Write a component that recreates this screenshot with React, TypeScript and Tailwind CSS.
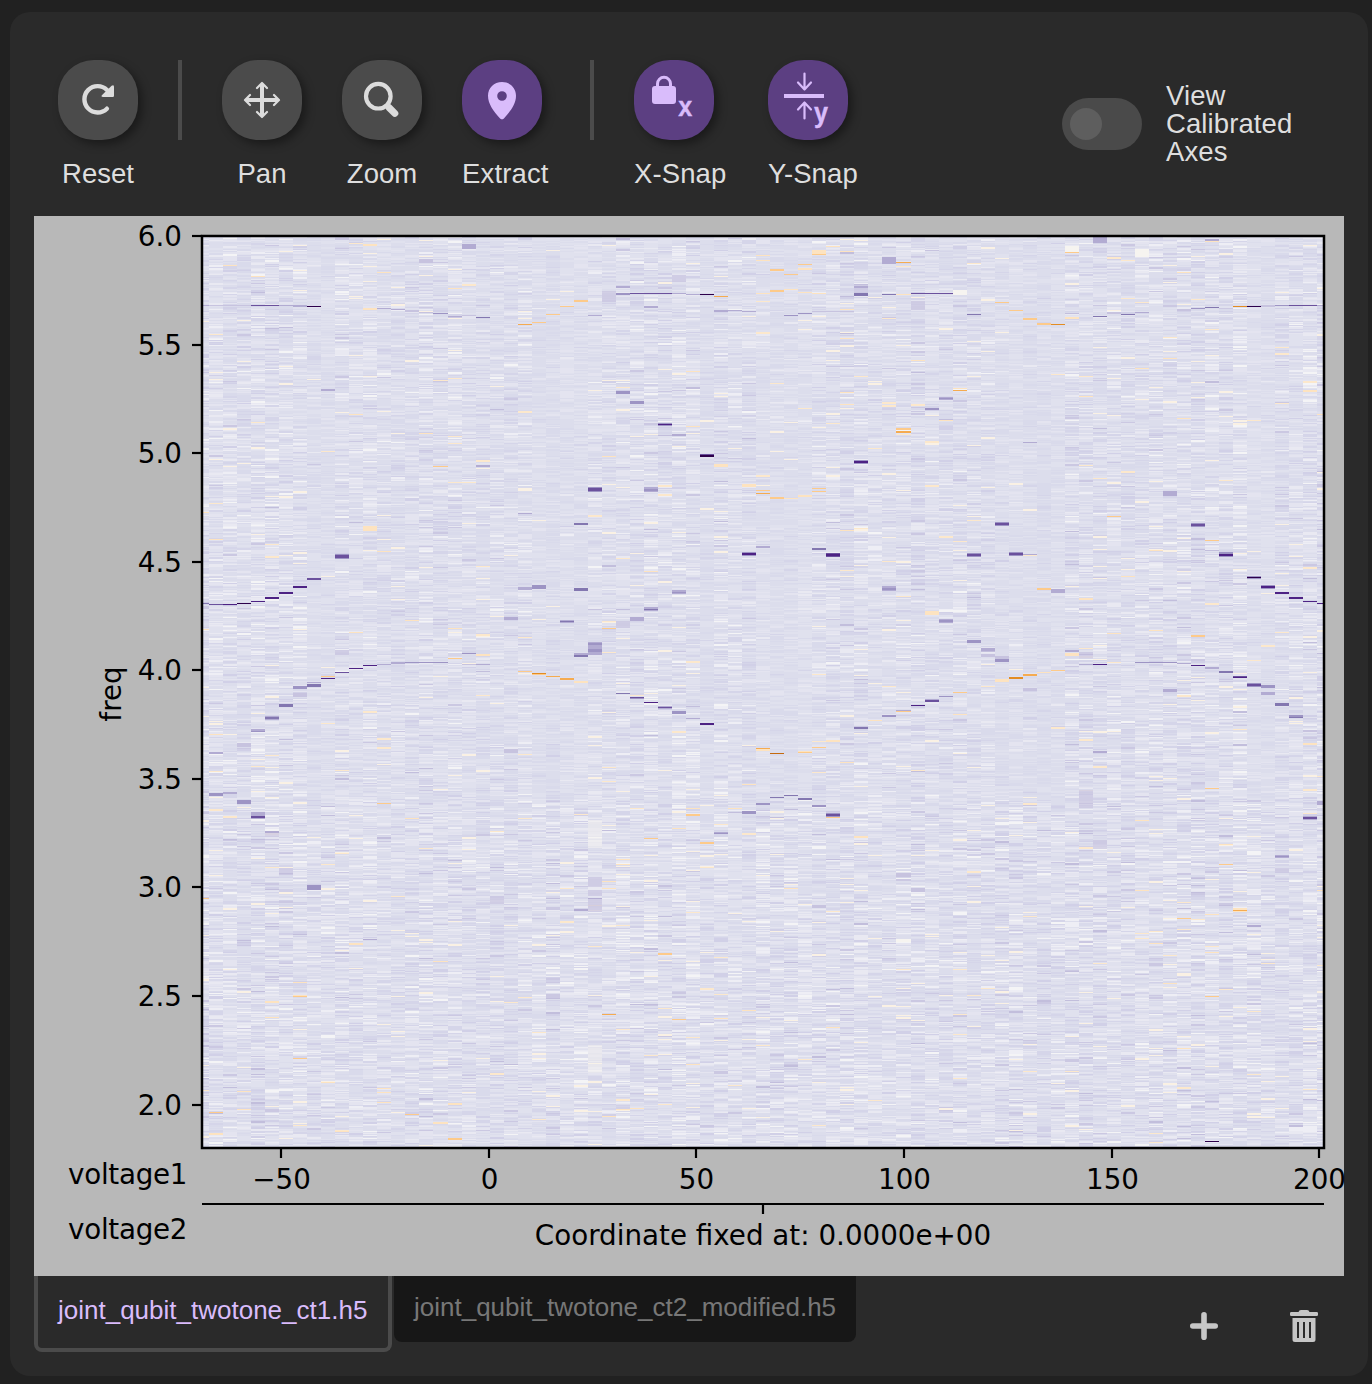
import React, { useMemo } from "react";

const SANS = "font-['Liberation_Sans',Arial,sans-serif]";

/* ---------- heat map ---------- */

const LEFT = 202;
const TOP = 236;
const RIGHT = 1324;
const BOTTOM = 1148;

const NOISE_COLORS = [
  "#fce8cc", "#faf1e4", "#f4f4f6", "#eeeef5", "#e9e9f2", "#e4e4f0", "#e0e1ee",
  "#dcddec", "#d9daeb", "#d5d5e9", "#d1d0e7", "#cbc8e2", "#c2bedc", "#b7b1d5",
];

const PEAK_COLORS: Record<string, string> = {
  A: "#2d004b", B: "#4d2284", b: "#6b519d", C: "#8377b0", c: "#9d94c4",
  D: "#b2abd2", E: "#c7c3df", o: "#fde3c0", p: "#fdca8a", q: "#f5ab50", r: "#e38c22", s: "#c4690e",
};

// column left edge, first row, rows, colour key
const PEAKS = `
203 305 1 D;209 305 1 E;223 305 1 E;237 305 1 E;251 305 1 b;265 305 1 b;279 305 1 D;293 305 2 D;307 306 1 A
363 308 2 o;363 244 2 o;377 308 1 D;391 309 1 D;405 310 2 E;419 312 1 E;433 313 1 c;447 316 1 D;461 315 1 E;475 317 1 C
518 324 1 q;532 322 1 p;546 314 1 p;560 306 1 p;574 300 2 p;461 244 5 D;419 259 4 E;321 389 2 D;363 526 5 o
335 554 5 c;335 555 3 b;307 578 2 b;293 586 2 B;279 592 2 B;265 597 2 B;251 601 1 B;237 603 1 A;223 604 1 B;209 604 1 b;203 603 1 C
475 465 2 D;433 466 1 p;518 587 3 D;532 585 4 c;574 523 2 C;574 588 3 C;419 433 1 o;447 288 1 o;518 513 1 D;377 272 1 o
377 551 1 o;349 414 1 o;251 276 1 o;223 265 1 o;203 512 1 o;209 539 1 o
616 286 2 D;602 291 11 E;616 293 2 c;630 293 1 b;644 293 1 b;658 293 1 b;672 293 1 D;686 294 1 D;700 294 1 A;714 296 1 q
756 293 1 o;770 290 2 p;784 289 1 o;798 292 1 o;812 293 1 o;910 293 1 b;924 293 1 b;938 293 1 b;882 294 1 C;896 294 1 o
854 285 8 E;854 286 2 D;854 293 3 C;672 275 7 E;714 310 2 D;728 310 1 D;742 311 1 D;784 315 1 c;798 313 1 c;812 311 1 E;826 311 1 E;840 311 1 E
588 315 1 D;770 269 2 p;784 274 1 p;798 264 1 p;798 268 2 o;812 250 5 o;812 254 1 p;756 255 1 o;756 260 1 o;826 246 1 o;840 251 1 o
882 257 7 D;896 262 1 q;910 301 9 E;644 306 2 D;616 391 3 c;630 401 3 c;658 423 3 c;658 424 1 B;672 434 2 D;686 426 1 o
700 454 3 b;700 455 2 A;714 464 3 o;742 484 3 o;756 490 1 p;756 493 1 q;770 497 2 p;784 498 1 o;798 495 2 o;812 488 1 p;812 491 1 p
588 487 5 c;588 488 3 b;644 487 5 D;644 489 2 c;742 552 4 c;742 553 2 B;756 546 2 D;812 548 2 C;826 553 4 b;826 554 2 B;840 530 1 o
854 460 4 c;854 461 2 B;896 428 2 p;896 431 2 q;910 360 1 o;924 408 2 c;938 397 3 D;938 398 1 c;938 420 1 o;882 586 5 D;882 588 2 c
672 590 4 D;672 592 1 c;840 392 1 o;840 404 1 o;602 456 1 o;644 571 1 o;588 609 1 E;924 250 1 E;686 371 1 o;840 309 1 o;840 338 1 o
966 314 1 C;994 302 1 p;1008 310 1 p;1022 318 2 p;1036 323 2 p;1051 324 1 r;1065 317 2 o;1093 316 1 C;1107 312 2 E;1121 314 1 C
1135 312 1 D;1177 309 2 E;1191 308 1 c;1205 307 1 C;1233 306 1 r;1247 306 1 A;1261 305 2 E;1275 305 1 c;1289 305 1 b;1303 305 1 b;1317 305 1 D
1093 237 6 D;1205 239 2 D;1205 241 1 o;1065 246 6 y;1065 252 1 p;952 290 5 y;952 388 1 o;952 390 1 q;1163 491 5 D;1191 523 4 c;1191 524 2 b
994 522 4 c;994 523 2 b;966 553 4 c;966 554 2 b;1008 552 4 c;1008 553 2 b;1022 554 1 D;1219 552 5 c;1219 554 2 B;1205 540 1 p;1107 516 1 p
1247 576 3 c;1247 577 1 A;1261 585 4 c;1261 586 2 B;1275 592 2 B;1289 597 2 B;1303 601 1 B;1317 603 1 B;1036 588 2 p;1051 589 4 D;1079 598 2 o
1022 442 1 D;1163 358 1 o;1177 418 1 o;1177 272 1 o;1135 249 8 y;1135 368 1 o;1149 550 1 o;1121 576 1 o;1317 414 1 o;1303 390 2 o;1079 396 1 o
335 650 5 E;321 678 1 B;307 684 3 C;307 682 1 D;293 686 3 c;293 693 4 E;335 672 1 b;349 668 1 B;363 665 1 B;377 664 1 D;391 662 2 D
405 662 1 c;419 662 1 c;433 662 1 c;447 658 1 p;461 653 1 c;475 654 2 o;461 664 1 E;475 664 1 D;265 716 4 D;265 717 2 C;279 704 3 C;251 729 3 D;251 731 1 c
237 743 4 E;209 752 2 D;209 793 3 c;223 792 2 D;237 800 4 c;251 812 7 D;251 816 2 b;265 831 6 E;265 831 2 D;307 885 5 c;321 676 1 p;203 898 1 p;377 803 1 p
518 671 1 p;532 673 1 r;532 674 1 p;546 676 1 q;560 678 2 q;574 681 2 o;504 617 3 D;560 620 3 D;560 621 1 C;574 653 4 D;574 655 2 C;504 749 4 E;490 896 8 E
349 943 2 o;433 961 1 o;293 982 1 o;293 996 1 p;405 620 1 o;349 632 1 o;447 628 1 o;279 868 5 E;209 734 1 o;203 629 1 o;363 939 1 D;405 818 1 o
588 642 13 D;588 643 2 c;588 649 3 c;602 628 1 p;616 621 7 E;630 617 4 D;644 607 4 D;644 609 1 C;616 693 1 C;630 697 2 c;630 697 1 b;644 702 1 B
658 706 3 D;658 707 1 b;672 711 3 c;686 718 1 D;700 723 2 B;756 748 1 q;756 749 2 o;770 753 1 s;798 752 1 p;798 751 1 o;812 747 1 p;826 740 2 o
854 727 2 C;882 715 2 c;896 710 1 D;896 711 1 p;868 720 1 o;910 705 1 B;924 700 2 b;924 699 1 D;938 696 1 c;924 611 4 o;938 619 4 D;938 620 2 c
742 811 3 c;756 803 2 c;770 797 1 C;784 795 1 C;798 798 2 C;812 805 2 c;826 813 4 c;826 814 2 b;826 817 1 p;714 832 2 D;714 833 1 c
700 842 2 p;686 814 2 p;686 808 1 o;588 820 28 x;588 877 10 E;588 890 6 E;588 898 14 E;588 898 1 D;658 885 2 E;658 953 2 p;910 888 4 E;896 873 4 E;644 838 1 p;728 808 1 o
602 1014 1 q;616 859 1 o;616 864 1 o;602 881 1 o;602 888 1 o;784 888 1 o;672 828 1 o;742 784 1 o;840 762 1 o;854 836 2 o;896 939 3 y;574 909 2 D;812 905 3 E
966 640 3 c;980 648 3 D;980 654 3 E;994 659 3 c;994 679 3 o;1008 677 2 r;1022 674 2 q;1036 672 1 o;1051 670 1 p;1065 650 2 D;1065 653 3 o;1079 654 1 D;1079 652 6 E
1093 664 1 B;1079 664 1 D;1135 662 1 c;1149 662 1 c;1163 662 1 c;1177 663 1 D;1191 665 1 B;1205 667 2 D;1219 671 2 C;1233 676 1 b;1233 677 1 B;1247 683 4 c;1247 684 2 b
1261 685 3 c;1261 692 3 D;1275 703 3 C;1289 715 3 c;1289 717 1 C;1303 730 2 E;1303 816 4 D;1303 817 2 b;1163 689 3 D;1022 688 3 E;1079 790 18 E;1093 840 9 E;1093 751 2 D
1275 855 3 D;1275 856 1 c;1205 788 1 p;1191 635 2 p;1233 908 4 o;1233 910 1 q;1177 918 1 p;1247 925 2 D;1205 914 1 o;1317 801 4 D;952 692 1 p;952 714 1 o;994 656 3 E
1135 890 1 o;1135 820 1 o;1219 864 1 p;1219 844 1 o;1149 943 1 o;1163 983 1 o;1205 952 1 o;1205 996 1 p;1205 1141 1 A;1303 743 2 o;1317 890 1 o;1275 868 5 E;1107 633 1 o;1149 630 1 o
209 1112 1 p;237 1091 1 o;237 1109 1 o;209 1133 2 o;321 1082 1 o;377 1088 1 o;377 1092 1 o;377 1102 1 o;335 1131 1 o;405 1114 1 p;447 1103 2 o;447 1138 2 p;433 1122 2 o
265 1001 2 o;265 1017 1 o;293 1058 1 p;293 995 1 o;588 1045 28 x;616 1109 1 o;630 1108 1 o;672 1019 1 p;714 1018 1 o;742 1010 1 o;1177 1048 1 o;602 1116 1 o;686 1064 1 o;826 1027 1 o
`;

function random(seed: number) {
  let s = seed;
  return () => {
    s = (s + 0x6d2b79f5) | 0;
    let t = Math.imul(s ^ (s >>> 15), 1 | s);
    t = (t + Math.imul(t ^ (t >>> 7), 61 | t)) ^ t;
    return ((t ^ (t >>> 14)) >>> 0) / 4294967296;
  };
}

const columnEdge = (i: number) => (i === 0 ? LEFT : Math.min(RIGHT, Math.round(209 + 14.03 * (i - 1))));

function buildNoise() {
  const rnd = random(4127);
  const paths: string[] = NOISE_COLORS.map(() => "");
  const calm = [8, 9, 24, 25, 26, 27, 36, 40, 41, 42, 43, 57, 58, 59, 60, 61, 75, 76];
  for (let c = 0; c <= 80; c++) {
    const x0 = columnEdge(c);
    const w = columnEdge(c + 1) - x0;
    if (w <= 0) continue;
    const base = 6.3 + rnd() * 0.8;
    const calmColumn = calm.includes(c);
    const variation = rnd() * 0.35;
    let drift = 0;
    let y = TOP;
    while (y < BOTTOM) {
      const quiet = calmColumn && y < 800 ? 0.5 : 0.8 + variation;
      const amp = quiet * (y < 800 ? 1.7 : 2);
      const g = rnd() + rnd() + rnd() - 1.5;
      drift = drift * 0.88 + (rnd() - 0.5) * 0.8;
      let v = base + g * amp * 1.8 + drift * quiet;
      const r = rnd();
      if (r < 0.012 * quiet) v = rnd() < 0.3 ? 0 : 1;
      else if (r > 0.985) v += 3 * quiet;
      else if (r > 0.94) v -= 3 * quiet;
      const k = Math.max(v < 1.2 && r > 0.012 ? 2 : 0, Math.min(12, Math.round(v)));
      const h = rnd() < 0.25 ? 2 : 1;
      paths[k] += "M" + x0 + " " + y + "h" + w + "v" + h + "h-" + w + "z";
      y += h;
    }
  }
  return paths;
}

function parsePeaks() {
  return PEAKS.trim().split(/[;\n]/).map((item) => {
    const [x, y, h, key] = item.trim().split(" ");
    const i = Math.max(0, Math.round((+x - 209) / 14.03) + 1);
    const x0 = columnEdge(+x === 203 ? 0 : i);
    const x1 = columnEdge(+x === 203 ? 1 : i + 1);
    return { x: x0, y: +y, w: x1 - x0, h: +h, key };
  });
}

const Y_TICKS: [string, number][] = [
  ["6.0", 236], ["5.5", 345], ["5.0", 453], ["4.5", 562], ["4.0", 670],
  ["3.5", 779], ["3.0", 887], ["2.5", 996], ["2.0", 1105],
];
const X_TICKS: [string, number][] = [
  ["−50", 281.5], ["0", 489.5], ["50", 696.5], ["100", 904.5], ["150", 1112.5], ["200", 1319.5],
];

function Plot() {
  const noise = useMemo(buildNoise, []);
  const peaks = useMemo(parsePeaks, []);
  return (
    <svg
      className="block h-[1060px] w-[1310px] shrink-0 overflow-visible bg-[#b8b8b8] font-['DejaVu_Sans',sans-serif] text-[27.75px]"
      viewBox="34 216 1310 1060"
      fill="#000"
    >
      <g shapeRendering="crispEdges">
        <rect x={LEFT} y={TOP} width={RIGHT - LEFT} height={BOTTOM - TOP} fill="#dfe0ee" />
        {noise.map((d, i) => (
          <path key={i} d={d} fill={NOISE_COLORS[i]} />
        ))}
        {peaks.map((p, i) => (
          <rect
            key={i} x={p.x} y={p.y} width={p.w} height={p.h}
            fill={PEAK_COLORS[p.key] ?? "#f6f4f0"}
            opacity={p.key === "x" ? 0.45 : p.key === "E" && p.h > 4 ? 0.7 : 1}
          />
        ))}
      </g>
      <rect x="202" y="236" width="1122" height="912" fill="none" stroke="#000" strokeWidth="2.5" />
      {Y_TICKS.map(([label, y]) => (
        <g key={label}>
          <path d={`M192 ${y}h10`} stroke="#000" strokeWidth="2.2" />
          <text x="182" y={y + 10} textAnchor="end">{label}</text>
        </g>
      ))}
      {X_TICKS.map(([label, x]) => (
        <g key={label}>
          <path d={`M${Math.round(x - 0.1)} 1148v10`} stroke="#000" strokeWidth="2.2" />
          <text x={x} y="1189" textAnchor="middle">{label}</text>
        </g>
      ))}
      <text x="0" y="0" textAnchor="middle" transform="translate(121 694) rotate(-90)">freq</text>
      <path d="M202 1204H1324M763 1204v10" stroke="#000" strokeWidth="2.2" />
      <text x="68" y="1184" textLength="119.5">voltage1</text>
      <text x="68" y="1239" textLength="119.5">voltage2</text>
      <text x="763" y="1245" textAnchor="middle">Coordinate fixed at: 0.0000e+00</text>
    </svg>
  );
}

/* ---------- toolbar ---------- */

function ResetIcon() {
  return (
    <svg className="size-10" viewBox="0 0 40 40" fill="none">
      <path d="M29 10A13.2 13.2 0 1 0 28.900 28.700" stroke="#dcdcdc" strokeWidth="4.400" strokeLinecap="round" />
      <path d="M36 6.500V15.800q0 1.200-1.200 1.200H25q-2.400-.1-.9-2L33.600 5.800q2-1.600 2.400.7Z" fill="#dcdcdc" />
    </svg>
  );
}

function PanIcon() {
  return (
    <svg className="size-10" viewBox="0 0 40 40" fill="none" stroke="#dcdcdc" strokeLinecap="round" strokeLinejoin="round">
      <path d="M20 4v32M4 20h32" strokeWidth="4" strokeLinecap="butt" />
      <path d="M15 8l5-5 5 5M15 32l5 5 5-5M8 15l-5 5 5 5M32 15l5 5-5 5" strokeWidth="2.200" />
    </svg>
  );
}

function ZoomIcon() {
  return (
    <svg className="size-10" viewBox="0 0 40 40" fill="none" stroke="#dcdcdc">
      <circle cx="16.300" cy="16.200" r="12.300" strokeWidth="4.200" />
      <path d="M24.500 24.500l3 3" strokeWidth="5" />
      <path d="M27.200 27.800l5.600 5.600" strokeWidth="7" strokeLinecap="round" />
    </svg>
  );
}

function ExtractIcon() {
  return (
    <svg className="size-10" viewBox="0 0 40 40" fill="#d9bcfb" fillRule="evenodd">
      <path d="M20 2C12 2 6 8 6 15.800c0 8.200 5.400 15.400 12.100 22.600q1.900 1.700 3.800 0C28.600 31.200 34 24 34 15.800 34 8 28 2 20 2Zm0 9.200a4.800 4.800 0 1 1 0 9.600 4.800 4.800 0 0 1 0-9.600Z" />
    </svg>
  );
}

function XSnapIcon() {
  return (
    <svg className="size-20" viewBox="0 0 80 80">
      <rect x="18" y="26" width="24" height="18" rx="3" fill="#d9bcfb" />
      <path d="M23.500 27v-3.200a6.500 6.500 0 0 1 13 0V27" fill="none" stroke="#d9bcfb" strokeWidth="3" />
      <text x="44.200" y="56" fill="#d9bcfb" stroke="#d9bcfb" strokeWidth="0.400" className="font-['Liberation_Sans',Arial,sans-serif] text-[27px] font-bold" textLength="14" lengthAdjust="spacingAndGlyphs">x</text>
    </svg>
  );
}

function YSnapIcon() {
  return (
    <svg className="size-20" viewBox="0 0 80 80">
      <g fill="none" stroke="#d9bcfb" strokeWidth="2.200" strokeLinecap="round" strokeLinejoin="round">
        <path d="M36.500 13.500v16M30 22.500l6.500 7 6.500-7M36.500 58.500v-16M30 49.500l6.500-7 6.500 7" />
      </g>
      <path d="M16 36h40" stroke="#d9bcfb" strokeWidth="4" />
      <text x="46" y="61.500" fill="#d9bcfb" stroke="#d9bcfb" strokeWidth="0.400" className="font-['Liberation_Sans',Arial,sans-serif] text-[27px] font-bold" textLength="14" lengthAdjust="spacingAndGlyphs">y</text>
    </svg>
  );
}

function ToolButton({ label, active, className, align, children }: {
  label: string; active?: boolean; className: string; align?: string; children: React.ReactNode;
}) {
  return (
    <div className={"flex w-20 shrink-0 flex-col " + className}>
      <button className={"flex size-20 items-center justify-center rounded-[36px] shadow-[4px_4px_10px_rgba(0,0,0,0.4)] " + (active ? "bg-[#5c3f82]" : "bg-[#4b4b4b]")}>
        {children}
      </button>
      <span className={"mt-[18px] whitespace-nowrap text-[27.5px] leading-8 text-[#dedede] " + (align ?? "text-center")}>{label}</span>
    </div>
  );
}

const Separator = ({ className }: { className: string }) => <div className={"h-20 w-1 shrink-0 bg-[#4b4b4b] " + className} />;

function Toolbar() {
  return (
    <header className="flex h-[204px] shrink-0 items-start pl-12 pt-12">
      <ToolButton label="Reset" className=""><ResetIcon /></ToolButton>
      <Separator className="ml-10" />
      <ToolButton label="Pan" className="ml-10"><PanIcon /></ToolButton>
      <ToolButton label="Zoom" className="ml-10"><ZoomIcon /></ToolButton>
      <ToolButton label="Extract" active className="ml-10" align="text-left tracking-[0.15px]"><ExtractIcon /></ToolButton>
      <Separator className="ml-12" />
      <ToolButton label="X-Snap" active className="ml-10" align="text-left tracking-[0.1px]"><XSnapIcon /></ToolButton>
      <ToolButton label="Y-Snap" active className="ml-[54px]" align="text-left tracking-[0.1px]"><YSnapIcon /></ToolButton>
      <div className="ml-[214px] mt-[22px] flex items-center gap-6">
        <div className="flex h-[52px] w-20 items-center rounded-full bg-[#4a4a4a] pl-2">
          <div className="size-8 rounded-full bg-[#5e5e5e]" />
        </div>
        <div className="w-[150px] text-[27.5px] leading-7 tracking-[0.1px] text-[#dedede]">View Calibrated Axes</div>
      </div>
    </header>
  );
}

/* ---------- tabs ---------- */

function Tabs() {
  return (
    <footer className="flex h-[100px] items-start pl-6">
      <div className="flex h-[76px] w-[358px] shrink-0 rounded-b-lg border-4 border-t-0 border-[#4b4b4b] pl-5 pt-[18px] text-[26px] leading-8 text-[#d9bcfb]">
        <span className="whitespace-nowrap">joint_qubit_twotone_ct1.h5</span>
      </div>
      <div className="ml-0.5 flex h-[66px] w-[462px] shrink-0 rounded-b-lg bg-[#171717] pl-5 pt-[15px] text-[26px] leading-8 text-[#777]">
        <span className="whitespace-nowrap">joint_qubit_twotone_ct2_modified.h5</span>
      </div>
      <div className="ml-[334px] mt-[34px] flex items-center gap-[72px]">
        <svg className="size-7" viewBox="0 0 28 28" stroke="#c6c6c6" strokeWidth="5.600" strokeLinecap="round">
          <path d="M14 2.800v22.400M2.800 14h22.400" />
        </svg>
        <svg className="h-8 w-7" viewBox="0 0 28 32" fill="#c6c6c6">
          <path d="M1.300 2H8.500Q9 0 11 0h6q2 0 2.500 2h7.200Q28 2 28 3.200V4.800Q28 6 26.700 6H1.300Q0 6 0 4.800V3.200Q0 2 1.300 2Z" />
          <path fillRule="evenodd" d="M2.500 8h23v21.500q0 2.500-2.500 2.500H5Q2.500 32 2.500 29.500ZM7 12v16h2V12Zm6 0v16h2V12Zm6 0v16h2V12Z" />
        </svg>
      </div>
    </footer>
  );
}

export default function App() {
  return (
    <main className={"h-[1384px] w-[1372px] overflow-hidden bg-[#212121] pl-2.5 pt-3 " + SANS}>
      <section className="flex h-[1364px] w-[1358px] flex-col rounded-[20px] bg-[#2a2a2a]">
        <Toolbar />
        <div className="flex pl-6">
          <Plot />
        </div>
        <Tabs />
      </section>
    </main>
  );
}
